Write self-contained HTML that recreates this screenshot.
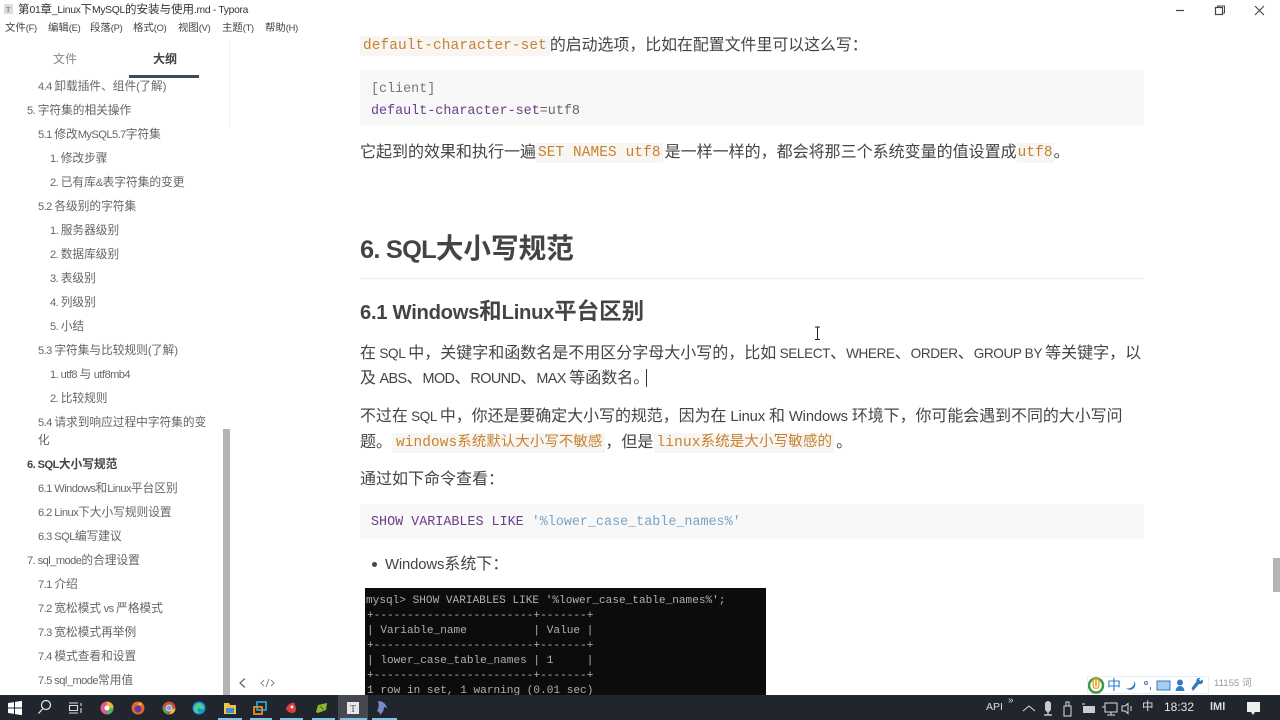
<!DOCTYPE html>
<html lang="zh"><head><meta charset="utf-8"><title>Typora</title>
<style>
html,body{margin:0;padding:0;width:1280px;height:720px;overflow:hidden;background:#fff}
body{position:relative;font-family:"Liberation Sans","Noto Sans CJK SC",sans-serif;color:#333}
.a,.o,.p,.m{position:absolute;white-space:nowrap}
i{font-style:normal;font-size:.9em;letter-spacing:-.03em}
em{font-style:normal;font-size:.85em;letter-spacing:-.03em}
s{text-decoration:none;font-size:.93em;letter-spacing:-.01em}
.o{font-size:11.7px;line-height:18px;color:#666;margin-top:1px}
.o i{font-size:.95em;letter-spacing:-.05em}
.p{font-size:16px;line-height:24px;color:#444;left:360px}
.n{font-size:10.4px;line-height:15px;color:#444;position:absolute;top:21px;white-space:nowrap}
.m{font-family:"Liberation Mono","Noto Sans CJK SC",monospace;font-size:13.4px;line-height:20px}
code{font-family:"Liberation Mono","Noto Sans CJK SC",monospace;font-size:14.4px;letter-spacing:.12px;color:#c8812f;background:#f8f6f3;padding:2px 2px;position:relative;top:-1px}
.b{position:absolute;background:#f8f8f8;left:360px;width:784px}
.t{position:absolute;white-space:pre}
</style></head><body>
<svg class="a" style="left:4px;top:4px" width="10" height="11"><rect width="9" height="10" fill="#ddd"/><text x="2" y="8" font-size="7" fill="#555" font-family="Liberation Serif">T</text></svg>
<div class="a" style="left:18px;top:2px;font-size:11.5px;line-height:16px;color:#333">第<i>01</i>章<i>_Linux</i>下<i>MySQL</i>的安装与使用<i>.md - Typora</i></div>
<div class="n" style="left:5px">文件<i>(F)</i></div>
<div class="n" style="left:48px">编辑<i>(E)</i></div>
<div class="n" style="left:90px">段落<i>(P)</i></div>
<div class="n" style="left:133px">格式<i>(O)</i></div>
<div class="n" style="left:178px">视图<i>(V)</i></div>
<div class="n" style="left:222px">主题<i>(T)</i></div>
<div class="n" style="left:265px">帮助<i>(H)</i></div>
<svg class="a" style="left:1170px;top:3px" width="100" height="14" fill="none" stroke="#444"><path d="M6 7.500h8" stroke-width="1.200"/><rect x="45.500" y="4.500" width="7" height="7" stroke-width="1.200"/><path d="M47.500 4.500v-1.500h7v7h-2" stroke-width="1"/><path d="M85 3l9 9M94 3l-9 9" stroke-width="1.100"/></svg>

<div class="a" style="left:53px;top:50px;font-size:12px;line-height:18px;color:#888">文件</div>
<div class="a" style="left:153px;top:50px;font-size:12px;line-height:18px;color:#444;font-weight:bold">大纲</div>
<div class="a" style="left:129px;top:75px;width:70px;height:3px;background:#3f4a5c"></div>
<div class="a" style="left:229px;top:40px;width:1px;height:88px;background:#f2f2f2"></div>

<div class="o" style="left:38px;top:77px"><i>4.4 </i>卸载插件、组件<i>(</i>了解<i>)</i></div>
<div class="o" style="left:27px;top:101px"><i>5. </i>字符集的相关操作</div>
<div class="o" style="left:38px;top:125px"><i>5.1 </i>修改<i>MySQL5.7</i>字符集</div>
<div class="o" style="left:50px;top:149px"><i>1. </i>修改步骤</div>
<div class="o" style="left:50px;top:173px"><i>2. </i>已有库<i>&amp;</i>表字符集的变更</div>
<div class="o" style="left:38px;top:197px"><i>5.2 </i>各级别的字符集</div>
<div class="o" style="left:50px;top:221px"><i>1. </i>服务器级别</div>
<div class="o" style="left:50px;top:245px"><i>2. </i>数据库级别</div>
<div class="o" style="left:50px;top:269px"><i>3. </i>表级别</div>
<div class="o" style="left:50px;top:293px"><i>4. </i>列级别</div>
<div class="o" style="left:50px;top:317px"><i>5. </i>小结</div>
<div class="o" style="left:38px;top:341px"><i>5.3 </i>字符集与比较规则<i>(</i>了解<i>)</i></div>
<div class="o" style="left:50px;top:365px"><i>1. utf8 </i>与<i> utf8mb4</i></div>
<div class="o" style="left:50px;top:389px"><i>2. </i>比较规则</div>
<div class="o" style="left:38px;top:413px"><i>5.4 </i>请求到响应过程中字符集的变</div>
<div class="o" style="left:38px;top:431px">化</div>
<div class="o" style="left:27px;top:455px;font-weight:bold;color:#444"><i>6. SQL</i>大小写规范</div>
<div class="o" style="left:38px;top:479px"><i>6.1 Windows</i>和<i>Linux</i>平台区别</div>
<div class="o" style="left:38px;top:503px"><i>6.2 Linux</i>下大小写规则设置</div>
<div class="o" style="left:38px;top:527px"><i>6.3 SQL</i>编写建议</div>
<div class="o" style="left:27px;top:551px"><i>7. sql_mode</i>的合理设置</div>
<div class="o" style="left:38px;top:575px"><i>7.1 </i>介绍</div>
<div class="o" style="left:38px;top:599px"><i>7.2 </i>宽松模式<i> vs </i>严格模式</div>
<div class="o" style="left:38px;top:623px"><i>7.3 </i>宽松模式再举例</div>
<div class="o" style="left:38px;top:647px"><i>7.4 </i>模式查看和设置</div>
<div class="o" style="left:38px;top:671px"><i>7.5 sql_mode</i>常用值</div>
<div class="a" style="left:223px;top:429px;width:7px;height:266px;background:#b4b4b4"></div>
<svg class="a" style="left:236px;top:676px" width="40" height="14" fill="none" stroke="#666"><path d="M9 2.500l-5 4.500 5 4.500" stroke-width="1.200"/><path d="M28 4l-3 3 3 3M35 4l3 3-3 3M33 3l-3 8" stroke-width=".8"/></svg>

<div class="a" style="left:360px;top:36px;font-size:15.900px;line-height:20px;color:#444"><code style="padding:2px 3px">default-character-set</code>的启动选项，比如在配置文件里可以这么写：</div>
<div class="b" style="top:70px;height:56px"></div>
<div class="m" style="left:371px;top:80px;color:#777">[client]</div>
<div class="m" style="left:371px;top:102px;color:#6b3d88">default-character-set<span style="color:#666">=utf8</span></div>
<div class="p" style="top:141px">它起到的效果和执行一遍<code style="margin-right:2px">SET NAMES utf8</code>是一样一样的，都会将那三个系统变量的值设置成<code style="padding:2px 1px">utf8</code>。</div>

<div class="a" style="left:360px;top:231px;font-size:27.600px;line-height:36px;font-weight:bold;color:#444"><i style="font-size:.92em">6. SQL</i>大小写规范</div>
<div class="a" style="left:360px;top:278px;width:784px;height:1px;background:#eee"></div>
<div class="a" style="left:360px;top:298px;font-size:22.500px;line-height:28px;font-weight:bold;color:#444"><i style="letter-spacing:-.015em">6.1 Windows</i>和<i style="letter-spacing:-.015em">Linux</i>平台区别</div>

<div class="p" style="top:342px">在<em> SQL </em>中，关键字和函数名是不用区分字母大小写的，比如<em> SELECT</em>、<em>WHERE</em>、<em>ORDER</em>、<em>GROUP BY </em>等关键字，以</div>
<div class="p" style="top:367px">及<i style="letter-spacing:-.04em"> ABS</i>、<i style="letter-spacing:-.04em">MOD</i>、<i style="letter-spacing:-.04em">ROUND</i>、<i style="letter-spacing:-.04em">MAX </i>等函数名。</div>
<div class="a" style="left:646px;top:369px;width:1px;height:18px;background:#333"></div>
<svg class="a" style="left:813px;top:326px" width="9" height="15" fill="none" stroke="#222"><path d="M2 1h2l.5 .7.5-.7h2M4.500 1.500v11M2 13.500h2l.5-.7.5 .7h2"/></svg>
<div class="p" style="top:405px;font-size:15.930px">不过在<em> SQL </em>中，你还是要确定大小写的规范，因为在<s> Linux </s>和<s> Windows </s>环境下，你可能会遇到不同的大小写问</div>
<div class="p" style="top:431px">题。<code style="padding:2px 3px 2px 4px">windows系统默认大小写不敏感</code>，但是<code style="font-size:14.500px;margin:0 2px 0 1px">linux系统是大小写敏感的</code>。</div>
<div class="p" style="top:468px">通过如下命令查看：</div>
<div class="b" style="top:504px;height:35px"></div>
<div class="m" style="left:371px;top:513px;color:#6b3d88">SHOW VARIABLES LIKE <span style="color:#7ba3c4">'%lower_case_table_names%'</span></div>
<div class="a" style="left:372px;top:562px;width:5px;height:5px;border-radius:50%;background:#444"></div>
<div class="p" style="left:385px;top:553px"><s>Windows</s>系统下：</div>

<div class="a" style="left:365px;top:588px;width:401px;height:107px;background:#0c0c0c;overflow:hidden;color:#b0b0b0;font-family:'Liberation Mono',monospace;font-size:11.100px;line-height:15px"><div class="t" style="left:1px;top:6px">mysql&gt; SHOW VARIABLES LIKE '%lower_case_table_names%';</div><div class="t" style="left:2px;top:21px">+------------------------+-------+</div><div class="t" style="left:2px;top:36px">| Variable_name          | Value |</div><div class="t" style="left:2px;top:51px">+------------------------+-------+</div><div class="t" style="left:2px;top:66px">| lower_case_table_names | 1     |</div><div class="t" style="left:2px;top:81px">+------------------------+-------+</div><div class="t" style="left:2px;top:96px">1 row in set, 1 warning (0.01 sec)</div></div>

<div class="a" style="left:1273px;top:558px;width:7px;height:34px;background:#b4b4b4"></div>

<div class="a" style="left:1087px;top:676px;width:122px;height:18px;background:#fff;border:1px solid #e4eef4;box-sizing:border-box"></div>
<svg class="a" style="left:1088px;top:677px" width="120" height="17"><circle cx="8" cy="8.500" r="7" fill="none" stroke="#3c9a4a" stroke-width="2.500"/><path d="M4.500 2.500a6.500 6.500 0 0 1 7 0v6a3.500 3.500 0 0 1-7 0z" fill="#f2a51e"/><path d="M6.500 3v5.500a1.500 1.500 0 0 0 3 0V3" fill="none" stroke="#fff" stroke-width="1.200"/><path d="M46 4a5 5 0 1 1-8 7 6 6 0 0 0 8-7z" fill="#2e7cc4"/><circle cx="58" cy="6" r="1.500" fill="none" stroke="#3a78b8"/><path d="M62.500 10v3" stroke="#3a78b8"/><rect x="69" y="4" width="13" height="9" fill="#a9cdec" stroke="#2e7cc4"/><circle cx="92" cy="5.500" r="3" fill="#2e7cc4"/><path d="M87.500 14a4.500 5 0 0 1 9 0z" fill="#2e7cc4"/><path d="M105 14l6-7a3 3 0 0 0 3.500-4.500l-2 1.500-1.500-1.500 1.500-1.500a3 3 0 0 0-4 3.500l-5 6.500z" fill="#2e7cc4"/></svg>
<div class="a" style="left:1107px;top:676px;font-size:14px;line-height:18px;color:#2e7cc4">中</div>
<div class="a" style="left:1214px;top:677px;font-size:9.600px;line-height:14px;color:#999">11155 词</div>

<div class="a" style="left:0;top:695px;width:1280px;height:25px;background:#21252e"></div>
<div class="a" style="left:338px;top:695px;width:30px;height:25px;background:#454850"></div>
<svg class="a" style="left:0;top:695px" width="400" height="25">
<path d="M8 8l6-.900v5.400H8zM15 6.900l7-1v6.600h-7zM8 13.500h6v5.400l-6-.900zM15 13.500h7v6.600l-7-1z" fill="#fff"/>
<circle cx="46" cy="10" r="4.500" fill="none" stroke="#eee" stroke-width="1.200"/><path d="M42.500 14l-4 4.500" stroke="#eee" stroke-width="1.200"/>
<path d="M69 8h9M69 18h9M69.500 10.500h8v5h-8zM81 8v3M81 13v5" fill="none" stroke="#ddd" stroke-width="1.100"/>
<circle cx="107" cy="13" r="6.500" fill="#e55a8c"/><path d="M107 6.500a6.500 6.500 0 0 1 6.500 6.500h-6.500z" fill="#f0b429"/><path d="M113.500 13a6.500 6.500 0 0 1-6.500 6.500v-6.500z" fill="#4fb06a"/><circle cx="107" cy="13" r="2.500" fill="#fff"/>
<circle cx="138" cy="13" r="6.500" fill="#e8622b"/><circle cx="138" cy="14" r="3.500" fill="#5a3fa8"/><path d="M133 8l4 1 4-2 1 4z" fill="#f7b32b"/>
<circle cx="169" cy="13" r="6.500" fill="#cf4b3c"/><path d="M169 19.500a6.500 6.500 0 0 1-6-9l3 5z" fill="#4fa458"/><path d="M175.500 13a6.500 6.500 0 0 1-3 5.500l-3.500 1 3-5z" fill="#eec13b"/><circle cx="169" cy="13" r="3" fill="#6fa8dc" stroke="#ddd"/>
<circle cx="199" cy="13" r="6.500" fill="#1f8fd8"/><path d="M194 15a5 5 0 0 1 10-3c.5 3-4 3-4.500 1-2 0-3 3 0 5-3 .5-5-1-5.500-3z" fill="#4fd08a"/>
<path d="M224 8h5l1 2h6v9h-12z" fill="#f2c14e"/><rect x="226" y="13" width="8" height="5" fill="#3a8fd6"/>
<rect x="257" y="7" width="9" height="8" fill="none" stroke="#2aa2c9" stroke-width="1.800"/><rect x="254" y="12" width="8" height="7" fill="none" stroke="#ee8a1e" stroke-width="1.800"/>
<path d="M286 14c1-5 6-7 9-6-1 1 1 3 1 6s-2 4-4 4c-3 0-5-2-6-4z" fill="#d84040"/><circle cx="292" cy="12" r="1.500" fill="#eee"/>
<path d="M316 17l2-7 9-2-1 7-8 3z" fill="#8ab82e"/><path d="M320 11l4 4" stroke="#4d6d18"/>
<rect x="347" y="7" width="12" height="12" fill="#e8e8e8"/><text x="350" y="17" font-size="10" fill="#555" font-family="Liberation Serif">T</text>
<path d="M378 6c5 0 8 3 9 7l-3-1c0 4-2 6-4 8 0-2-1-3-3-4 2-3 2-7 1-10z" fill="#7b87c6"/>
<g fill="#7fc4e4"><rect x="218" y="23" width="24" height="2"/><rect x="250" y="23" width="22" height="2"/><rect x="280" y="23" width="23" height="2"/><rect x="312" y="23" width="23" height="2"/><rect x="340" y="23" width="27" height="2"/><rect x="372" y="23" width="25" height="2"/></g>
</svg>
<div class="a" style="left:986px;top:700px;font-size:10.500px;line-height:14px;color:#ddd">API</div>
<div class="a" style="left:1008px;top:695px;font-size:10px;line-height:12px;color:#ddd">»</div>
<svg class="a" style="left:1020px;top:695px" width="260" height="25" fill="none" stroke="#ddd">
<path d="M3 16l6-5 6 5"/>
<rect x="25" y="6" width="6" height="11" rx="3" fill="#ccc" stroke="none"/><path d="M28 17v3M24 20h8" stroke-width="1.200"/>
<path d="M44 11h7v10h-7zM46 11V7h3v4"/>
<rect x="63" y="11" width="12" height="7" fill="#ccc" stroke="none"/><path d="M62 9h3"/>
<rect x="85" y="8" width="12" height="9"/><path d="M91 17v3M87 20h8M82 12h3"/>
<path d="M102 11h3l3-2.500v10l-3-2.500h-3zM111 11v5" />
<path d="M227 7h13v10h-5l-2 3-2-3h-4z" fill="#eee" stroke="none"/>
</svg>
<div class="a" style="left:1142px;top:699px;font-size:11.500px;line-height:16px;color:#ddd">中</div>
<div class="a" style="left:1164px;top:699px;font-size:12px;line-height:16px;color:#e4e4e4">18:32</div>
<div class="a" style="left:1210px;top:699px;font-size:11px;line-height:16px;font-weight:bold;color:#ddd">lMl</div>
</body></html>
